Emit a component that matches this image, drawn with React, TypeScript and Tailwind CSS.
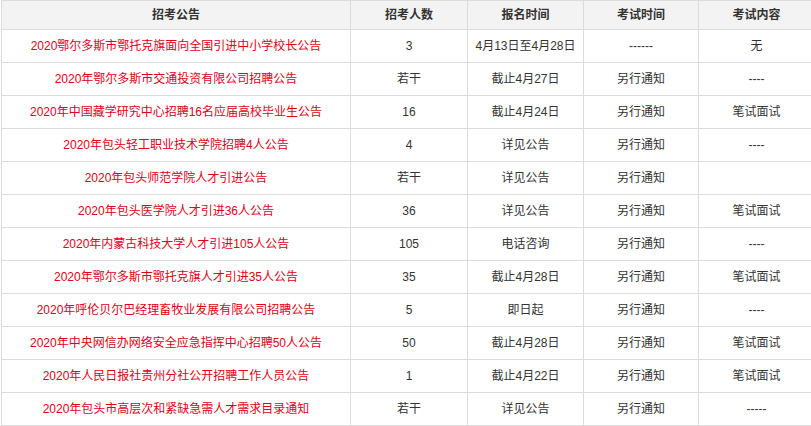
import React from "react";

interface Notice {
  title: string;
  count: string;
  signup: string;
  examTime: string;
  content: string;
}

const notices: Notice[] = [
  { title: "2020鄂尔多斯市鄂托克旗面向全国引进中小学校长公告", count: "3", signup: "4月13日至4月28日", examTime: "------", content: "无" },
  { title: "2020年鄂尔多斯市交通投资有限公司招聘公告", count: "若干", signup: "截止4月27日", examTime: "另行通知", content: "----" },
  { title: "2020年中国藏学研究中心招聘16名应届高校毕业生公告", count: "16", signup: "截止4月24日", examTime: "另行通知", content: "笔试面试" },
  { title: "2020年包头轻工职业技术学院招聘4人公告", count: "4", signup: "详见公告", examTime: "另行通知", content: "----" },
  { title: "2020年包头师范学院人才引进公告", count: "若干", signup: "详见公告", examTime: "另行通知", content: "" },
  { title: "2020年包头医学院人才引进36人公告", count: "36", signup: "详见公告", examTime: "另行通知", content: "笔试面试" },
  { title: "2020年内蒙古科技大学人才引进105人公告", count: "105", signup: "电话咨询", examTime: "另行通知", content: "----" },
  { title: "2020年鄂尔多斯市鄂托克旗人才引进35人公告", count: "35", signup: "截止4月28日", examTime: "另行通知", content: "笔试面试" },
  { title: "2020年呼伦贝尔巴经理畜牧业发展有限公司招聘公告", count: "5", signup: "即日起", examTime: "另行通知", content: "----" },
  { title: "2020年中央网信办网络安全应急指挥中心招聘50人公告", count: "50", signup: "截止4月28日", examTime: "另行通知", content: "笔试面试" },
  { title: "2020年人民日报社贵州分社公开招聘工作人员公告", count: "1", signup: "截止4月22日", examTime: "另行通知", content: "笔试面试" },
  { title: "2020年包头市高层次和紧缺急需人才需求目录通知", count: "若干", signup: "详见公告", examTime: "另行通知", content: "-----" },
];

const headers = ["招考公告", "招考人数", "报名时间", "考试时间", "考试内容"];
const widths = ["w-[349px]", "w-[117px]", "w-[116px]", "w-[115px]", "w-[116px]"];

export default function App() {
  return (
    <div className="w-[811px] h-[426px] overflow-hidden bg-white font-['Liberation_Sans','Noto_Sans_CJK_SC',sans-serif] text-[12px] text-[#333]">
      <table className="w-[813px] border-collapse table-fixed ml-px">
        <thead>
          <tr>
            {headers.map((h, i) => (
              <th
                key={h}
                className={`${widths[i]} h-[29px] p-0 border border-[#dcdcdc] bg-[#f3f3f3] font-bold text-center text-[#333]`}
              >
                {h}
              </th>
            ))}
          </tr>
        </thead>
        <tbody>
          {notices.map((n) => (
            <tr key={n.title}>
              <td className="h-[33px] p-0 border border-[#dcdcdc] text-center text-[#e0001b]">{n.title}</td>
              <td className="h-[33px] p-0 border border-[#dcdcdc] text-center">{n.count}</td>
              <td className="h-[33px] p-0 border border-[#dcdcdc] text-center">{n.signup}</td>
              <td className="h-[33px] p-0 border border-[#dcdcdc] text-center">{n.examTime}</td>
              <td className="h-[33px] p-0 border border-[#dcdcdc] text-center">{n.content}</td>
            </tr>
          ))}
        </tbody>
      </table>
    </div>
  );
}
